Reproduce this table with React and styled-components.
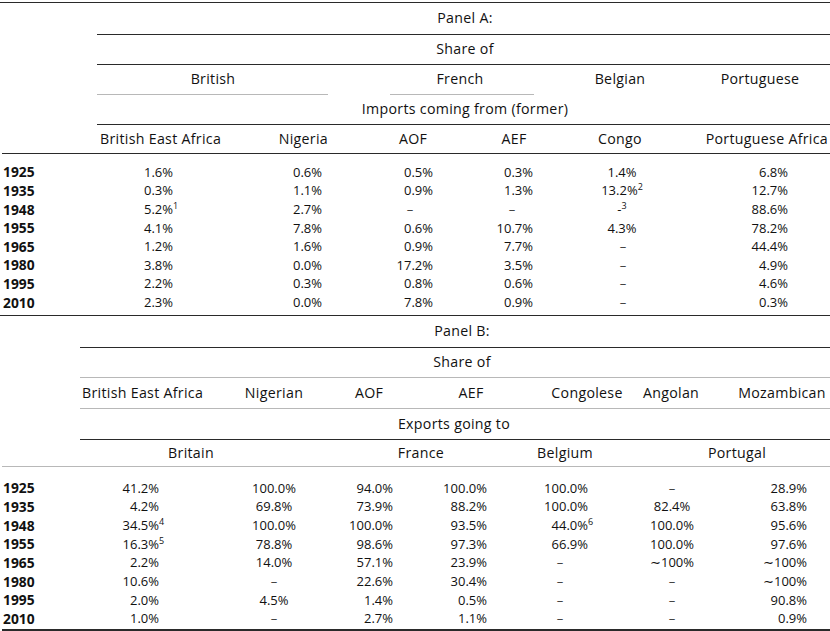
import React from 'react';
import styled, { createGlobalStyle } from 'styled-components';

const GlobalStyle = createGlobalStyle`
  html, body {
    margin: 0;
    padding: 0;
    background: #fff;
  }
  body {
    font-family: "Open Sans", "Noto Sans", sans-serif;
    font-size: 13px;
    color: #111;
  }
`;

const Page = styled.div`
  width: 830px;
  padding-top: 2px;
`;

const Line = styled.div`
  display: grid;
  grid-template-columns: ${p => p.$cols.map(w => w + 'px').join(' ')};
  height: ${p => p.$h}px;
  align-items: center;
`;

const HeadLine = styled(Line)`
  font-size: 14.2px;
  letter-spacing: 0.3px;
`;

const RuleLine = styled.div`
  display: grid;
  grid-template-columns: ${p => p.$cols.map(w => w + 'px').join(' ')};
  height: ${p => p.$h || 1}px;
`;

const Rule = styled.div`
  grid-column: ${p => p.$span};
  background: ${p => (p.$light ? '#b8b8b8' : '#2a2a2a')};
  margin-left: ${p => p.$ml || 0}px;
  margin-right: ${p => p.$mr || 0}px;
`;

const Body = styled.div`
  padding-top: ${p => p.$pt}px;
  padding-bottom: ${p => p.$pb}px;
`;

const Cell = styled.div`
  grid-column: ${p => p.$span};
  display: flex;
  justify-content: ${p => p.$justify};
  padding-left: ${p => p.$pl}px;
  padding-right: ${p => p.$pr}px;
  white-space: nowrap;
  font-weight: ${p => (p.$bold ? 700 : 400)};
  font-size: ${p => (p.$bold ? '13.8px' : 'inherit')};
  line-height: 1;
`;

const Sup = styled.span`
  display: inline-block;
  width: ${p => (p.$hang ? '0' : 'auto')};
  font-size: 9px;
  position: relative;
  top: -5px;
  line-height: 0;
`;

const Dash = styled.span`
  color: #444;
`;

// column widths -> grid line positions
const edges = widths => widths.reduce((acc, w) => [...acc, acc[acc.length - 1] + w], [0]);

// work out flex alignment and padding so the text sits at a given x
function place(bounds, from, to, anchor) {
  const L = bounds[from];
  const R = bounds[to];
  const [kind, x] = anchor;
  if (kind === 'l') return { $justify: 'flex-start', $pl: x - L, $pr: 0 };
  if (kind === 'r') return { $justify: 'flex-end', $pl: 0, $pr: R - x };
  const d = 2 * x - L - R;
  return { $justify: 'center', $pl: d > 0 ? d : 0, $pr: d < 0 ? -d : 0 };
}

const Text = ({ bounds, span, anchor, bold, children }) => (
  <Cell $span={`${span[0] + 1} / ${span[1] + 1}`} $bold={bold} {...place(bounds, span[0], span[1], anchor)}>
    {children}
  </Cell>
);

const Value = ({ v, hang }) => {
  if (v === '–') return <Dash>–</Dash>;
  if (Array.isArray(v)) {
    return (
      <span>
        {v[0]}
        <Sup $hang={hang}>{v[1]}</Sup>
      </span>
    );
  }
  return <span>{v}</span>;
};

const HeaderRow = ({ cols, h, cells }) => {
  const bounds = edges(cols);
  return (
    <HeadLine $cols={cols} $h={h}>
      {cells.map(c => (
        <Text key={c.t} bounds={bounds} span={c.s} anchor={c.a}>{c.t}</Text>
      ))}
    </HeadLine>
  );
};

const Rules = ({ cols, h, segs }) => (
  <RuleLine $cols={cols} $h={h}>
    {segs.map((s, i) => (
      <Rule key={i} $span={`${s.s[0] + 1} / ${s.s[1] + 1}`} $light={s.light} $ml={s.ml} $mr={s.mr} />
    ))}
  </RuleLine>
);

const DataRows = ({ cols, rows, anchors, rowH }) => {
  const bounds = edges(cols);
  return rows.map(([year, ...vals]) => (
    <Line key={year} $cols={cols} $h={rowH}>
      <Text bounds={bounds} span={[0, 1]} anchor={['l', 3]} bold>{year}</Text>
      {vals.map((v, i) => {
        const a = anchors[i];
        const anchor = v === '–' && a.dash ? ['c', a.dash] : a.at;
        return (
          <Text key={i} bounds={bounds} span={[i + 1, i + 2]} anchor={anchor}>
            <Value v={v} hang={anchor[0] === 'r'} />
          </Text>
        );
      })}
    </Line>
  ));
};

/* ---------- Panel A ---------- */

const colsA = [97, 148, 85, 110, 100, 105, 185];

const anchorsA = [
  { at: ['r', 173] },
  { at: ['r', 322] },
  { at: ['r', 433], dash: 410 },
  { at: ['r', 533], dash: 512 },
  { at: ['c', 622], dash: 623 },
  { at: ['r', 788] },
];

const rowsA = [
  ['1925', '1.6%', '0.6%', '0.5%', '0.3%', '1.4%', '6.8%'],
  ['1935', '0.3%', '1.1%', '0.9%', '1.3%', ['13.2%', '2'], '12.7%'],
  ['1948', ['5.2%', '1'], '2.7%', '–', '–', ['-', '3'], '88.6%'],
  ['1955', '4.1%', '7.8%', '0.6%', '10.7%', '4.3%', '78.2%'],
  ['1965', '1.2%', '1.6%', '0.9%', '7.7%', '–', '44.4%'],
  ['1980', '3.8%', '0.0%', '17.2%', '3.5%', '–', '4.9%'],
  ['1995', '2.2%', '0.3%', '0.8%', '0.6%', '–', '4.6%'],
  ['2010', '2.3%', '0.0%', '7.8%', '0.9%', '–', '0.3%'],
];

/* ---------- Panel B ---------- */

const colsB = [80, 145, 95, 90, 100, 105, 105, 110];

const anchorsB = [
  { at: ['r', 159] },
  { at: ['c', 274] },
  { at: ['r', 393] },
  { at: ['r', 487] },
  { at: ['r', 588], dash: 560 },
  { at: ['c', 672] },
  { at: ['r', 807] },
];

const rowsB = [
  ['1925', '41.2%', '100.0%', '94.0%', '100.0%', '100.0%', '–', '28.9%'],
  ['1935', '4.2%', '69.8%', '73.9%', '88.2%', '100.0%', '82.4%', '63.8%'],
  ['1948', ['34.5%', '4'], '100.0%', '100.0%', '93.5%', ['44.0%', '6'], '100.0%', '95.6%'],
  ['1955', ['16.3%', '5'], '78.8%', '98.6%', '97.3%', '66.9%', '100.0%', '97.6%'],
  ['1965', '2.2%', '14.0%', '57.1%', '23.9%', '–', '∼100%', '∼100%'],
  ['1980', '10.6%', '–', '22.6%', '30.4%', '–', '–', '∼100%'],
  ['1995', '2.0%', '4.5%', '1.4%', '0.5%', '–', '–', '90.8%'],
  ['2010', '1.0%', '–', '2.7%', '1.1%', '–', '–', '0.9%'],
];

const App = () => (
  <>
    <GlobalStyle />
    <Page>
      <Rules cols={colsA} segs={[{ s: [0, 7] }]} />
      <HeaderRow cols={colsA} h={31} cells={[{ t: 'Panel A:', s: [1, 7], a: ['c', 465] }]} />
      <Rules cols={colsA} segs={[{ s: [1, 7] }]} />
      <HeaderRow cols={colsA} h={29} cells={[{ t: 'Share of', s: [1, 7], a: ['c', 465] }]} />
      <Rules cols={colsA} segs={[{ s: [1, 7] }]} />
      <HeaderRow
        cols={colsA}
        h={29}
        cells={[
          { t: 'British', s: [1, 3], a: ['c', 213] },
          { t: 'French', s: [3, 5], a: ['c', 460] },
          { t: 'Belgian', s: [5, 6], a: ['c', 620] },
          { t: 'Portuguese', s: [6, 7], a: ['c', 760] },
        ]}
      />
      <Rules
        cols={colsA}
        segs={[
          { s: [1, 3], light: true, mr: 2 },
          { s: [3, 5], light: true, ml: 60, mr: 6 },
        ]}
      />
      <HeaderRow cols={colsA} h={29} cells={[{ t: 'Imports coming from (former)', s: [1, 7], a: ['c', 465] }]} />
      <Rules cols={colsA} segs={[{ s: [1, 7] }]} />
      <HeaderRow
        cols={colsA}
        h={28}
        cells={[
          { t: 'British East Africa', s: [1, 2], a: ['l', 100] },
          { t: 'Nigeria', s: [2, 3], a: ['r', 328] },
          { t: 'AOF', s: [3, 4], a: ['c', 413] },
          { t: 'AEF', s: [4, 5], a: ['c', 514] },
          { t: 'Congo', s: [5, 6], a: ['c', 620] },
          { t: 'Portuguese Africa', s: [6, 7], a: ['r', 828] },
        ]}
      />
      <Rules cols={colsA} segs={[{ s: [0, 7], ml: 2 }]} />
      <Body $pt={9} $pb={3}>
        <DataRows cols={colsA} rows={rowsA} anchors={anchorsA} rowH={18.6} />
      </Body>

      <Rules cols={colsB} segs={[{ s: [0, 8] }]} />
      <HeaderRow cols={colsB} h={31} cells={[{ t: 'Panel B:', s: [1, 8], a: ['c', 462] }]} />
      <Rules cols={colsB} segs={[{ s: [1, 8] }]} />
      <HeaderRow cols={colsB} h={29} cells={[{ t: 'Share of', s: [1, 8], a: ['c', 462] }]} />
      <Rules cols={colsB} segs={[{ s: [1, 8], light: true }]} />
      <HeaderRow
        cols={colsB}
        h={30}
        cells={[
          { t: 'British East Africa', s: [1, 2], a: ['l', 82] },
          { t: 'Nigerian', s: [2, 3], a: ['c', 274] },
          { t: 'AOF', s: [3, 4], a: ['c', 369] },
          { t: 'AEF', s: [4, 5], a: ['c', 471] },
          { t: 'Congolese', s: [5, 6], a: ['c', 587] },
          { t: 'Angolan', s: [6, 7], a: ['c', 671] },
          { t: 'Mozambican', s: [7, 8], a: ['c', 782] },
        ]}
      />
      <Rules cols={colsB} segs={[{ s: [1, 8], light: true }]} />
      <HeaderRow cols={colsB} h={30} cells={[{ t: 'Exports going to', s: [1, 8], a: ['c', 454] }]} />
      <Rules cols={colsB} segs={[{ s: [1, 8] }]} />
      <HeaderRow
        cols={colsB}
        h={26}
        cells={[
          { t: 'Britain', s: [1, 3], a: ['c', 191] },
          { t: 'France', s: [3, 5], a: ['c', 421] },
          { t: 'Belgium', s: [5, 6], a: ['c', 565] },
          { t: 'Portugal', s: [6, 8], a: ['c', 737] },
        ]}
      />
      <Rules cols={colsB} segs={[{ s: [0, 8], light: true, ml: 2 }]} />
      <Body $pt={12} $pb={1}>
        <DataRows cols={colsB} rows={rowsB} anchors={anchorsB} rowH={18.7} />
      </Body>
      <Rules cols={colsB} h={2} segs={[{ s: [0, 8], ml: 2 }]} />
    </Page>
  </>
);

export default App;
